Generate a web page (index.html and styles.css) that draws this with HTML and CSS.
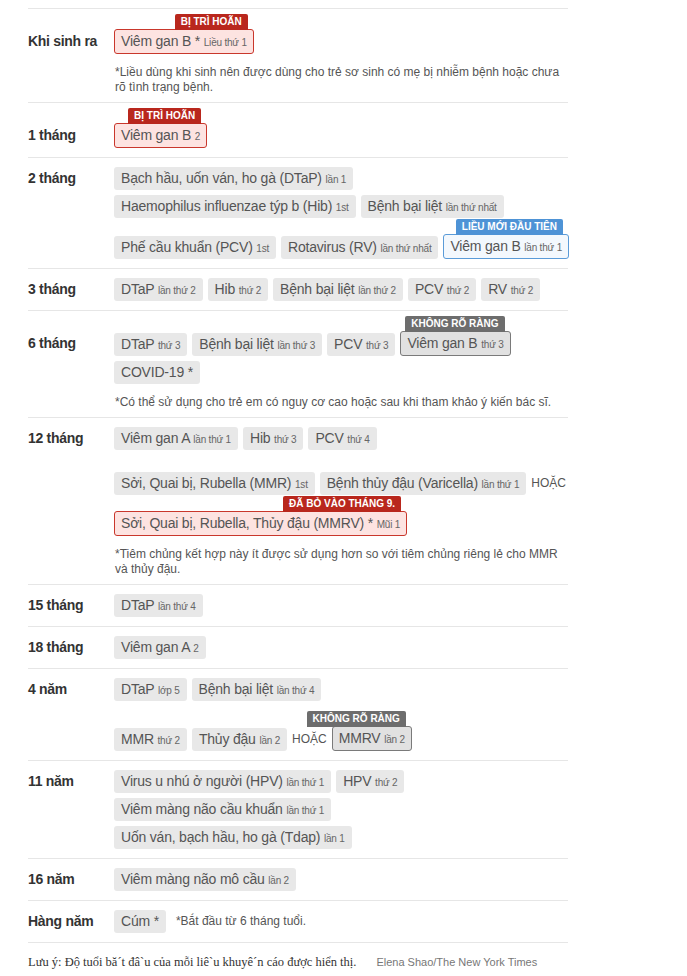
FILE: index.html
```html
<!DOCTYPE html>
<html lang="vi">
<head>
<meta charset="utf-8">
<title>Lịch tiêm chủng</title>
<link rel="stylesheet" href="styles.css">
</head>
<body>
<div class="schedule">

  <div class="row row--badge">
    <div class="age">Khi sinh ra</div>
    <div class="doses">
      <div class="line">
        <span class="pill pill--red">Viêm gan B * <small>Liều thứ 1</small><span class="badge badge--red">Bị trì hoãn</span></span>
      </div>
      <p class="note">*Liều dùng khi sinh nên được dùng cho trẻ sơ sinh có mẹ bị nhiễm bệnh hoặc chưa<br>rõ tình trạng bệnh.</p>
    </div>
  </div>

  <div class="row row--badge">
    <div class="age">1 tháng</div>
    <div class="doses">
      <div class="line">
        <span class="pill pill--red">Viêm gan B <small>2</small><span class="badge badge--red">Bị trì hoãn</span></span>
      </div>
    </div>
  </div>

  <div class="row">
    <div class="age">2 tháng</div>
    <div class="doses">
      <div class="line">
        <span class="pill">Bạch hầu, uốn ván, ho gà (DTaP) <small>lần 1</small></span>
      </div>
      <div class="line">
        <span class="pill">Haemophilus influenzae týp b (Hib) <small>1st</small></span>
        <span class="pill">Bệnh bại liệt <small>lần thứ nhất</small></span>
      </div>
      <div class="line">
        <span class="pill">Phế cầu khuẩn (PCV) <small>1st</small></span>
        <span class="pill">Rotavirus (RV) <small>lần thứ nhất</small></span>
        <span class="pill pill--blue">Viêm gan B <small>lần thứ 1</small><span class="badge badge--blue">Liều mới đầu tiên</span></span>
      </div>
    </div>
  </div>

  <div class="row">
    <div class="age">3 tháng</div>
    <div class="doses">
      <div class="line">
        <span class="pill">DTaP <small>lần thứ 2</small></span>
        <span class="pill">Hib <small>thứ 2</small></span>
        <span class="pill">Bệnh bại liệt <small>lần thứ 2</small></span>
        <span class="pill">PCV <small>thứ 2</small></span>
        <span class="pill">RV <small>thứ 2</small></span>
      </div>
    </div>
  </div>

  <div class="row row--badge">
    <div class="age">6 tháng</div>
    <div class="doses">
      <div class="line">
        <span class="pill">DTaP <small>thứ 3</small></span>
        <span class="pill">Bệnh bại liệt <small>lần thứ 3</small></span>
        <span class="pill">PCV <small>thứ 3</small></span>
        <span class="pill pill--gray">Viêm gan B <small>thứ 3</small><span class="badge badge--gray">Không rõ ràng</span></span>
      </div>
      <div class="line">
        <span class="pill">COVID-19 *</span>
      </div>
      <p class="note">*Có thể sử dụng cho trẻ em có nguy cơ cao hoặc sau khi tham khảo ý kiến bác sĩ.</p>
    </div>
  </div>

  <div class="row">
    <div class="age">12 tháng</div>
    <div class="doses">
      <div class="line">
        <span class="pill">Viêm gan A <small>lần thứ 1</small></span>
        <span class="pill">Hib <small>thứ 3</small></span>
        <span class="pill">PCV <small>thứ 4</small></span>
      </div>
      <div class="line line--group">
        <span class="pill">Sởi, Quai bị, Rubella (MMR) <small>1st</small></span>
        <span class="pill">Bệnh thủy đậu (Varicella) <small>lần thứ 1</small></span>
        <span class="or">HOẶC</span>
      </div>
      <div class="line">
        <span class="pill pill--red">Sởi, Quai bị, Rubella, Thủy đậu (MMRV) * <small>Mũi 1</small><span class="badge badge--red">Đã bỏ vào tháng 9.</span></span>
      </div>
      <p class="note">*Tiêm chủng kết hợp này ít được sử dụng hơn so với tiêm chủng riêng lẻ cho MMR<br>và thủy đậu.</p>
    </div>
  </div>

  <div class="row">
    <div class="age">15 tháng</div>
    <div class="doses">
      <div class="line">
        <span class="pill">DTaP <small>lần thứ 4</small></span>
      </div>
    </div>
  </div>

  <div class="row">
    <div class="age">18 tháng</div>
    <div class="doses">
      <div class="line">
        <span class="pill">Viêm gan A <small>2</small></span>
      </div>
    </div>
  </div>

  <div class="row">
    <div class="age">4 năm</div>
    <div class="doses">
      <div class="line">
        <span class="pill">DTaP <small>lớp 5</small></span>
        <span class="pill">Bệnh bại liệt <small>lần thứ 4</small></span>
      </div>
      <div class="line line--group-badge">
        <span class="pill">MMR <small>thứ 2</small></span>
        <span class="pill">Thủy đậu <small>lần 2</small></span>
        <span class="or">HOẶC</span>
        <span class="pill pill--gray">MMRV <small>lần 2</small><span class="badge badge--gray">Không rõ ràng</span></span>
      </div>
    </div>
  </div>

  <div class="row">
    <div class="age">11 năm</div>
    <div class="doses">
      <div class="line">
        <span class="pill">Virus u nhú ở người (HPV) <small>lần thứ 1</small></span>
        <span class="pill">HPV <small>thứ 2</small></span>
      </div>
      <div class="line">
        <span class="pill">Viêm màng não cầu khuẩn <small>lần thứ 1</small></span>
      </div>
      <div class="line">
        <span class="pill">Uốn ván, bạch hầu, ho gà (Tdap) <small>lần 1</small></span>
      </div>
    </div>
  </div>

  <div class="row">
    <div class="age">16 năm</div>
    <div class="doses">
      <div class="line">
        <span class="pill">Viêm màng não mô cầu <small>lần 2</small></span>
      </div>
    </div>
  </div>

  <div class="row row--last">
    <div class="age">Hàng năm</div>
    <div class="doses">
      <div class="line">
        <span class="pill">Cúm *</span>
        <span class="inline-note">*Bắt đầu từ 6 tháng tuổi.</span>
      </div>
    </div>
  </div>

  <p class="footer">Lưu ý: Độ tuổi bă´t đâ`u của mỗi liê`u khuyê´n cáo được hiển thị.<span class="credit">Elena Shao/The New York Times</span></p>
</div>
</body>
</html>
```

FILE: styles.css
```css
* { box-sizing: border-box; }

body {
  margin: 0;
  background: #fff;
  font-family: "Liberation Sans", Arial, sans-serif;
  color: #333;
}

.schedule {
  width: 540px;
  margin: 8px 0 0 28px;
}

.row {
  display: grid;
  grid-template-columns: 86px 1fr;
  padding: 9px 0 9px;
  border-top: 1px solid #e6e6e6;
}

.row--last {
  border-bottom: 1px solid #e6e6e6;
}

.age {
  font-size: 14px;
  font-weight: bold;
  line-height: 23px;
  letter-spacing: -0.3px;
  color: #333;
}

.row--badge .age {
  padding-top: 12px;
}

.doses {
  display: flex;
  flex-direction: column;
  gap: 5px;
}

.line {
  display: flex;
  align-items: flex-end;
  gap: 5px;
  white-space: nowrap;
}

.line--group {
  margin-top: 17px;
}

.line--group-badge {
  margin-top: 9px;
}

.pill {
  position: relative;
  display: inline-block;
  height: 23px;
  line-height: 23px;
  padding: 0 7px;
  border-radius: 3px;
  background: #e8e8e8;
  color: #555;
  font-size: 14px;
  letter-spacing: -0.2px;
}

.pill small {
  font-size: 10px;
  color: #666;
}

.pill--red,
.pill--blue,
.pill--gray {
  height: 25px;
  border: 1px solid;
  padding: 0 6px;
  margin-top: 11px;
}

.pill--red {
  background: #fde3e1;
  border-color: #c9372c;
}

.pill--blue {
  background: #f3f8fd;
  border-color: #5a9bd8;
}

.pill--gray {
  background: #e1e1e1;
  border-color: #7a7a7a;
}

.badge {
  position: absolute;
  right: 5px;
  bottom: 100%;
  height: 16px;
  line-height: 16px;
  padding: 0 6px;
  border-radius: 2px 2px 0 0;
  color: #fff;
  font-size: 10px;
  font-weight: bold;
  text-transform: uppercase;
  letter-spacing: 0;
  white-space: nowrap;
}

.badge--red { background: #b9271d; }
.badge--blue { background: #4e93d6; }
.badge--gray { background: #6d6d6d; }

.or {
  font-size: 12px;
  line-height: 23px;
  color: #555;
}

.note {
  margin: 6px 0 -2px 1px;
  font-size: 12px;
  line-height: 15px;
  color: #555;
}

.inline-note {
  margin-left: 5px;
  font-size: 12px;
  line-height: 23px;
  color: #555;
}

.footer {
  margin: 0;
  padding-top: 12px;
  font-family: "Liberation Serif", "Times New Roman", serif;
  font-size: 12.5px;
  line-height: 15px;
  color: #333;
}

.credit {
  margin-left: 20px;
  font-family: "Liberation Sans", Arial, sans-serif;
  font-size: 11px;
  color: #777;
}
```
